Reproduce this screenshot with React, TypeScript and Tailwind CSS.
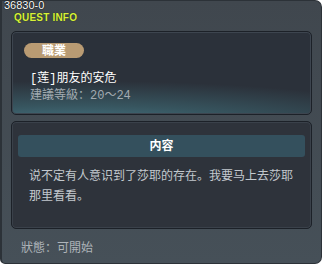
const cjk = "font-['Liberation_Sans','Noto_Sans_CJK_SC',sans-serif]";
const mono = "font-['Liberation_Mono','Noto_Sans_CJK_SC',monospace]";

function QuestHeader() {
  return (
    <div className="h-[30px] relative">
      <div className="absolute left-[2px] top-[-2px] text-[11px] leading-[13px] text-white [text-shadow:0_0_1px_#000,0_0_1px_#000]">
        36830-0
      </div>
      <div className="absolute left-[12px] top-[10px] text-[10px] leading-[13px] font-bold text-[#d8f03a] tracking-[0.2px] [text-shadow:0_0_1px_#1b2a05]">
        QUEST INFO
      </div>
    </div>
  );
}

function JobPanel() {
  return (
    <div className="mx-[9px] h-[84px] rounded-[5px] border border-[#1c2128] shadow-[inset_0_0_0_1px_#3d454f] bg-[radial-gradient(ellipse_160%_75%_at_22%_118%,#4b7d8c_0%,#37555f_38%,#2b313a_78%)] pl-[12px] pt-[11px]">
      <div className={`w-[60px] h-[15px] rounded-full bg-[#b99b73] flex items-center justify-center text-[12px] font-bold text-white leading-none ${cjk}`}>
        職業
      </div>
      <div className={`mt-[14px] ml-[6px] text-[12px] leading-[14px] text-white ${mono}`}>[莲]朋友的安危</div>
      <div className={`mt-[3px] ml-[6px] text-[12px] leading-[14px] text-[#a3abb1] ${mono}`}>建議等級：20～24</div>
    </div>
  );
}

function ContentPanel() {
  return (
    <div className="mx-[9px] mt-[6px] h-[108px] rounded-[5px] border border-[#1c2128] shadow-[inset_0_0_0_1px_#3a414a] bg-[#2e333b] pt-[13px]">
      <div className="mx-[6px] h-[22px] rounded-[3px] bg-[#34505d] flex items-center justify-center text-[12px] font-bold text-white">
        内容
      </div>
      <p className="mt-[9px] pl-[17px] pr-[12px] text-[12px] leading-[20px] text-[#c3c9ce]">
        说不定有人意识到了莎耶的存在。我要马上去莎耶那里看看。
      </p>
    </div>
  );
}

export default function App() {
  return (
    <div className={`w-[322px] h-[266px] bg-white ${cjk}`}>
      <div className="w-[322px] h-[264px] bg-[linear-gradient(#40474e,#465058)] rounded-tr-[7px] rounded-br-[7px] rounded-bl-[5px] border-l-2 border-r border-b border-[#2c3238] border-t border-t-[#2c3238]">
        <QuestHeader />
        <JobPanel />
        <ContentPanel />
        <div className="mt-[12px] ml-[19px] text-[12px] leading-[14px] text-[#aeb4b9]">狀態：可開始</div>
      </div>
    </div>
  );
}
